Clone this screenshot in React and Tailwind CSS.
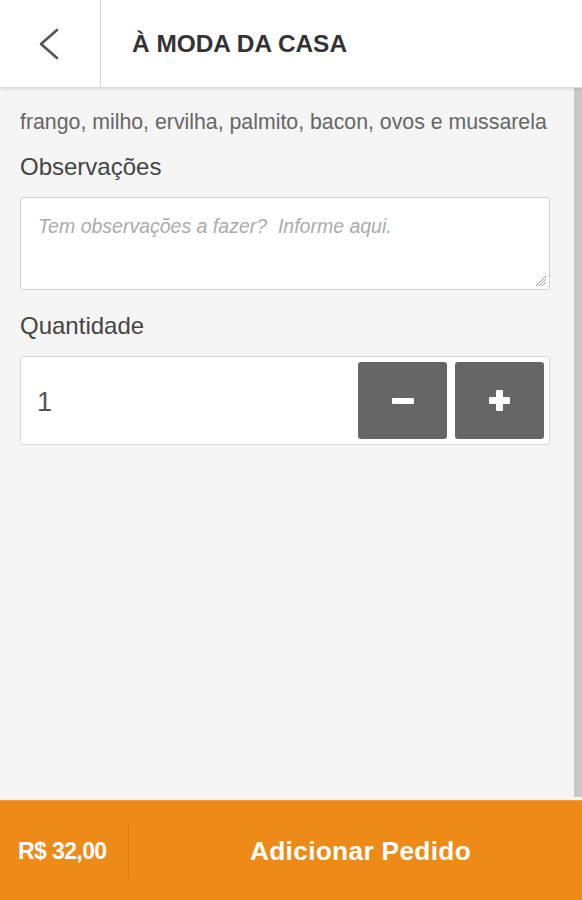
const FONT = { fontFamily: '"Liberation Sans", Arial, sans-serif' }

function Header() {
  return (
    <div className="flex h-[88px] bg-white border-b border-[#dcdcdc] shadow-[0_1px_3px_rgba(0,0,0,0.12)] relative z-10">
      <div className="w-[101px] flex items-center justify-center border-r border-[#d6d6d6]">
        <svg width="22" height="32" viewBox="0 0 22 32" className="-ml-[2px]">
          <polyline points="19,2 3,16 19,30" fill="none" stroke="#555" strokeWidth="2.6" strokeLinecap="round" strokeLinejoin="round" />
        </svg>
      </div>
      <div className="flex items-center pl-[31px] pt-[2px] text-[24.4px] text-[#333] font-bold">
        À MODA DA CASA
      </div>
    </div>
  )
}

function QuantityBox() {
  return (
    <div className="flex items-center h-[89px] bg-white border border-[#d8d8d8] rounded-[3px] pr-[5px]">
      <div className="flex-1 pl-[16px] pt-[3px] text-[27px] text-[#555]">1</div>
      <button className="w-[89px] h-[77px] bg-[#666] rounded-[3px] flex items-center justify-center mr-[8px]">
        <span className="block w-[22px] h-[6px] bg-white rounded-[1px]" />
      </button>
      <button className="w-[89px] h-[77px] bg-[#666] rounded-[3px] flex items-center justify-center relative">
        <span className="block w-[21px] h-[7px] bg-white rounded-[1px]" />
        <span className="block w-[7px] h-[21px] bg-white rounded-[1px] absolute" />
      </button>
    </div>
  )
}

export default function App() {
  return (
    <div className="w-[582px] h-[900px] flex flex-col bg-[#f5f5f5] overflow-hidden" style={FONT}>
      <Header />
      <div className="flex flex-1 min-h-0">
        <div className="flex-1 pl-[20px] pr-[24px] pt-[20px]">
          <p className="text-[21.3px] text-[#666] leading-[28px] whitespace-nowrap">
            frango, milho, ervilha, palmito, bacon, ovos e mussarela
          </p>
          <p className="text-[24px] text-[#444] mt-[17px] leading-[28px]">Observações</p>
          <div className="mt-[16px] h-[93px] bg-white border border-[#d0d0d0] rounded-[3px] relative">
            <p className="pl-[17px] pt-[16px] text-[19.5px] leading-[24px] italic text-[#aaa]">
              Tem observações a fazer?&nbsp; Informe aqui.
            </p>
            <svg className="absolute right-[2px] bottom-[2px]" width="13" height="13" viewBox="0 0 13 13">
              <path d="M12 2 L2 12 M12 5 L5 12 M12 8 L8 12" stroke="#999" strokeWidth="1" />
            </svg>
          </div>
          <p className="text-[24px] text-[#444] mt-[22px] leading-[28px]">Quantidade</p>
          <div className="mt-[16px]">
            <QuantityBox />
          </div>
        </div>
        <div className="w-[8px] bg-[#c9c9c9] mb-[3px]" />
      </div>
      <div className="h-[100px] bg-[#ee8a17] border-t border-[#f2a04a] flex items-center">
        <div className="w-[128px] pl-[18px] pt-[2px] text-[23px] font-bold text-white tracking-[-0.6px]">R$ 32,00</div>
        <div className="w-px h-[56px] bg-[#dd7d10]" />
        <div className="flex-1 text-center pt-[2px] text-[26.3px] font-bold text-white tracking-[0.3px] pl-[10px]">
          Adicionar Pedido
        </div>
      </div>
    </div>
  )
}
